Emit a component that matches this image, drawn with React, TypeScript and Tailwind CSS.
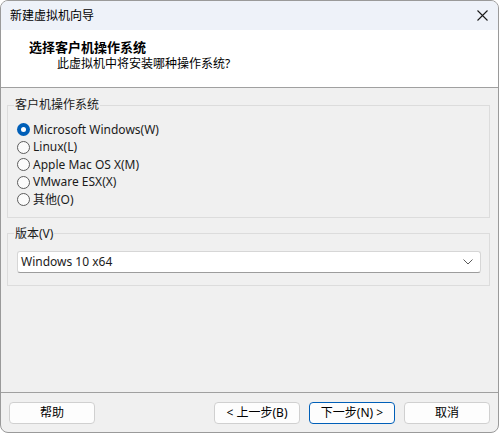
import React, { useState } from "react";

const font = { fontFamily: '"Noto Sans", "Noto Sans CJK SC", sans-serif' };

function Radio({ label, checked, onClick }: { label: string; checked: boolean; onClick: () => void }) {
  return (
    <div className="flex h-[17.5px] items-center cursor-default" onClick={onClick}>
      {checked ? (
        <span className="flex h-[13px] w-[13px] items-center justify-center rounded-full bg-[#005fb8]">
          <span className="h-[5px] w-[5px] rounded-full bg-white" />
        </span>
      ) : (
        <span className="h-[13px] w-[13px] rounded-full border border-[#5c5c5c] bg-[#fbfbfb]" />
      )}
      <span className="ml-[3px] text-[12px] leading-[16px] text-[#1b1b1b]">{label}</span>
    </div>
  );
}

function Btn({ children, primary }: { children: React.ReactNode; primary?: boolean }) {
  return (
    <button
      className={
        "flex h-[22px] w-[86px] items-center justify-center rounded-[4px] bg-[#fdfdfd] text-[12px] leading-[16px] text-black " +
        (primary ? "border border-[#005fb8]" : "border border-[#d0d0d0]")
      }
    >
      {children}
    </button>
  );
}

export default function App() {
  const systems = ["Microsoft Windows(W)", "Linux(L)", "Apple Mac OS X(M)", "VMware ESX(X)", "其他(O)"];
  const [sel, setSel] = useState(0);

  return (
    <div
      style={font}
      className="flex h-[433px] w-[499px] flex-col overflow-hidden rounded-[8px] border border-[#9a9a9a] bg-[#f0f0f0]"
    >
      {/* title bar */}
      <div className="flex h-[29px] shrink-0 items-center justify-between bg-[#eef2f9] pl-[9px] pr-[9px]">
        <span className="text-[12px] leading-[16px] text-black">新建虚拟机向导</span>
        <svg width="11" height="11" viewBox="0 0 11 11" className="mr-[1px]">
          <path d="M0.5 0.5 L10.5 10.5 M10.5 0.5 L0.5 10.5" stroke="#1a1a1a" strokeWidth="1.1" />
        </svg>
      </div>

      {/* header */}
      <div className="h-[58px] shrink-0 border-b border-[#a0a0a0] bg-white pt-[9px]">
        <div className="pl-[28px] text-[13px] font-bold leading-[17px] text-black">选择客户机操作系统</div>
        <div className="pl-[56px] text-[12px] leading-[16px] text-black">此虚拟机中将安装哪种操作系统?</div>
      </div>

      {/* body */}
      <div className="flex flex-1 flex-col pl-[6px] pr-[8px]">
        <fieldset className="mt-[9px] border border-[#dcdcdc] pb-[8px] pl-[9px] pr-[8px] pt-[8px]">
          <legend className="ml-[-3px] px-[1px] text-[12px] leading-[16px] text-[#1b1b1b]">客户机操作系统</legend>
          {systems.map((s, i) => (
            <Radio key={s} label={s} checked={sel === i} onClick={() => setSel(i)} />
          ))}
        </fieldset>

        <fieldset className="mt-[8px] border border-[#dcdcdc] pb-[12px] pl-[9px] pr-[8px] pt-[9px]">
          <legend className="ml-[-3px] px-[1px] text-[12px] leading-[16px] text-[#1b1b1b]">版本(V)</legend>
          <div className="flex h-[22px] items-center justify-between rounded-[3px] border border-[#d6d6d6] border-b-[#9c9c9c] bg-white pl-[3px] pr-[7px]">
            <span className="text-[12px] leading-[16px] text-[#1b1b1b]">Windows 10 x64</span>
            <svg width="10" height="6" viewBox="0 0 10 6">
              <path d="M0.5 0.5 L5 5 L9.5 0.5" fill="none" stroke="#5a5a5a" strokeWidth="1" />
            </svg>
          </div>
        </fieldset>
      </div>

      {/* footer */}
      <div className="h-[40px] shrink-0 border-t border-[#a0a0a0] pt-[9px]">
        <div className="flex items-center pl-[8px] pr-[8px]">
          <Btn>帮助</Btn>
          <div className="flex-1" />
          <div className="flex gap-[9px]">
            <Btn>&lt; 上一步(B)</Btn>
            <Btn primary>下一步(N) &gt;</Btn>
            <Btn>取消</Btn>
          </div>
        </div>
      </div>
    </div>
  );
}
